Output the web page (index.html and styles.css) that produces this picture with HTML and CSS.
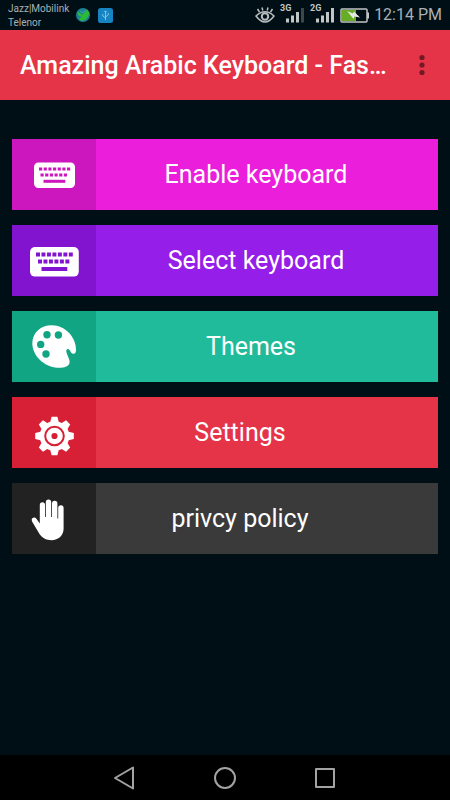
FILE: index.html
```
<!DOCTYPE html>
<html lang="en">
	<head>
		<meta charset="utf-8">
		<meta name="viewport" content="width=device-width, initial-scale=1">
		<title>Amazing Arabic Keyboard</title>
		<link rel="stylesheet" href="styles.css">
	</head>
	<body>
		<div class="statusbar">
			<div class="carriers">
				<div>Jazz|Mobilink</div>
				<div>Telenor</div>
			</div>
			<svg class="globe" width="14" height="14" viewBox="0 0 14 14">
				<circle cx="7" cy="7" r="7" fill="#1b8194"/>
				<path d="M1 4L4 5L6 7L9 4L11 1.500L13.500 5L12 9L9 12L5 13L3 10.500L6 9L3 8Z" fill="#2dbb35"/>
				<path d="M4 3L7 5L9 2" fill="none" stroke="#3ba7a6"/>
			</svg>
			<svg class="usb" width="15" height="15" viewBox="0 0 15 15">
				<rect width="15" height="15" rx="2.500" fill="#1683c2"/>
				<path d="M7.500 3V12M7.500 10L4.800 8V6M7.500 9L10.200 7V5M6.300 4.200L7.500 2.800L8.700 4.200" fill="none" stroke="#9bd0ec" stroke-width=".8"/>
			</svg>
			<div class="indicators">
				<svg width="20" height="30" viewBox="0 0 20 30" fill="none" stroke="#b9bec0" stroke-width="1.500">
					<path d="M1 16Q10 7.500 19 16Q10 28 1 16Z"/>
					<circle cx="10" cy="16.500" r="3.200" stroke-width="2"/>
					<path d="M2.500 9L4.500 12M7 7.500L7.800 10.500M13 7.500L12.200 10.500M17.500 9L15.500 12"/>
				</svg>
				<svg class="signal" width="25" height="30" viewBox="0 0 25 30">
					<text x="0" y="11">3G</text>
					<path d="M7.500 18.500V22.500M12.500 15.500V22.500M17.500 12V22.500"/>
					<path class="off" d="M22.500 8V22.500"/>
				</svg>
				<svg class="signal" width="25" height="30" viewBox="0 0 25 30">
					<text x="0" y="11">2G</text>
					<path d="M7.500 18.500V22.500M12.500 15.500V22.500M17.500 12V22.500M22.500 8V22.500"/>
				</svg>
				<svg width="29" height="30" viewBox="0 0 29 30">
					<rect x="1" y="9" width="26" height="13" rx="1" fill="none" stroke="#c2c5c6" stroke-width="1.500"/>
					<path d="M28 12.500V18.500" stroke="#c2c5c6" stroke-width="2"/>
					<rect x="2" y="10" width="14" height="11" fill="#67ac24"/>
					<path d="M7 11L13 13.500L14 11.500L20 17.500L14.500 16.500L13.500 19Z" fill="#e4e8e4"/>
				</svg>
				<time class="clock">12:14 PM</time>
			</div>
		</div>

		<header class="appbar">
			<h1 class="title">Amazing Arabic Keyboard - Fas…</h1>
			<button class="more" aria-label="More options">
				<svg width="6" height="22" viewBox="0 0 6 22" fill="#721a24">
					<circle cx="3" cy="3.500" r="2.600"/>
					<circle cx="3" cy="11" r="2.600"/>
					<circle cx="3" cy="18.500" r="2.600"/>
				</svg>
			</button>
		</header>

		<main class="menu">
			<button class="item enable">
				<span class="icon">
					<svg width="84" height="71" viewBox="0 0 84 71">
						<rect x="22" y="23.500" width="41" height="25.500" rx="4.500"/>
						<g class="keys" stroke-width="3">
							<path d="M27 30H58.200" stroke-dasharray="3.200 1.470"/>
							<path d="M28.500 36H55" stroke-dasharray="3.200 1.470"/>
							<path d="M31.500 42.300H53.300"/>
						</g>
					</svg>
				</span>
				<span class="label">Enable keyboard</span>
			</button>
			<button class="item select">
				<span class="icon">
					<svg width="84" height="71" viewBox="0 0 84 71">
						<rect x="18" y="22" width="48.800" height="29.600" rx="5"/>
						<g class="keys" stroke-width="4">
							<path d="M24 29.500H60.800" stroke-dasharray="4 1.470"/>
							<path d="M26 36.500H57.400" stroke-dasharray="4 1.470"/>
							<path d="M29.500 44H55.300"/>
						</g>
					</svg>
				</span>
				<span class="label">Select keyboard</span>
			</button>
			<button class="item themes">
				<span class="icon">
					<svg width="84" height="71" viewBox="0 0 84 71">
						<path d="M39.700 14.300C54 14.300 64 27 64 38.500C64 42 62.800 43.300 60.800 42.700C58.500 42 58 38 56 38C53.600 38 54.300 41 55.200 43.500C56.500 47 58.200 50 57.500 52C56.500 56 51 57 45.500 56.700C32 56 20.300 44.500 20.300 32.300C20.300 21.500 29 14.300 39.700 14.300Z"/>
						<g class="holes">
							<circle cx="35" cy="23.700" r="3.700"/>
							<circle cx="46.400" cy="24" r="3.700"/>
							<circle cx="28.700" cy="33.400" r="3.700"/>
							<circle cx="34" cy="43" r="3.700"/>
						</g>
					</svg>
				</span>
				<span class="label">Themes</span>
			</button>
			<button class="item settings">
				<span class="icon">
					<svg width="84" height="71" viewBox="0 0 84 71">
						<g transform="translate(42.500 39)">
							<circle r="14.800"/>
							<path id="teeth" d="M-4.500 -13L-2.900 -19.300H2.900L4.500 -13ZM-4.500 13L-2.900 19.300H2.900L4.500 13ZM-13 -4.500L-19.300 -2.900V2.900L-13 4.500ZM13 -4.500L19.300 -2.900V2.900L13 4.500Z"/>
							<use href="#teeth" transform="rotate(45)"/>
							<circle class="ring" r="9.300"/>
							<circle class="hole" r="3.100"/>
						</g>
					</svg>
				</span>
				<span class="label">Settings</span>
			</button>
			<button class="item policy">
				<span class="icon">
					<svg width="84" height="71" viewBox="0 0 84 71">
						<path d="M27.800 40.500V21.900A2.600 2.600 0 0 1 33 21.900V34H33.800V19.300A2.700 2.700 0 0 1 39.200 19.300V34H40V20.500A2.700 2.700 0 0 1 45.400 20.500V35.500H46.200V25A2.700 2.700 0 0 1 51.600 25V45.500C51.600 52.500 46.500 57.200 39.500 57.200C34 57.200 30 54.500 27.500 51L20.200 38.700C18.300 35 22.300 33 24.600 36Z"/>
					</svg>
				</span>
				<span class="label">privcy policy</span>
			</button>
		</main>

		<nav class="navbar">
			<button aria-label="Back">
				<svg width="24" height="24" viewBox="0 0 24 24"><path d="M2 12L20 1.500V22.500Z"/></svg>
			</button>
			<button aria-label="Home">
				<svg width="24" height="24" viewBox="0 0 24 24"><circle cx="12" cy="12" r="10"/></svg>
			</button>
			<button aria-label="Recent apps">
				<svg width="24" height="24" viewBox="0 0 24 24"><rect x="3" y="3" width="18" height="18"/></svg>
			</button>
		</nav>
	</body>
</html>
```
FILE: styles.css
```
* {
	box-sizing: border-box;
}

body {
	display: flex;
	flex-direction: column;
	min-height: 100vh;
	margin: 0;
	background: #000f16;
	color: white;
	font-family: Roboto, "Open Sans", sans-serif;
}

button {
	padding: 0;
	border: 0;
	background: none;
	color: inherit;
	font: inherit;
	cursor: pointer;
}

svg {
	display: block;
	flex: none;
}

/* status bar */
.statusbar {
	display: flex;
	align-items: center;
	height: 30px;
	padding: 0 8px;
	color: #a9afb2;
}

.carriers {
	padding-top: 2px;
	font-size: 10px;
	line-height: 14px;
}

.globe {
	margin-left: 7px;
}

.usb {
	margin-left: 8px;
}

.indicators {
	display: flex;
	align-items: center;
	gap: 5px;
	margin-left: auto;
}

.signal {
	fill: none;
	stroke: #c2c5c6;
	stroke-width: 3;
}

.signal text {
	fill: #c2c5c6;
	stroke: none;
	font-size: 9px;
	font-weight: bold;
}

.signal .off {
	stroke: #3a474d;
}

.clock {
	font-size: 16px;
	line-height: 30px;
}

/* title bar */
.appbar {
	display: flex;
	align-items: center;
	height: 70px;
	padding: 0 16px 0 20px;
	background: #e53347;
}

.title {
	flex: 1;
	min-width: 0;
	margin: 0;
	padding-top: 2px;
	overflow: hidden;
	font-size: 25px;
	font-weight: 500;
	line-height: 32px;
	white-space: nowrap;
}

.more {
	display: flex;
	justify-content: center;
	width: 24px;
	padding: 8px 0;
}

/* menu */
.menu {
	display: flex;
	flex: 1;
	flex-direction: column;
	gap: 15px;
	padding: 39px 12px;
}

.item {
	display: flex;
	align-items: center;
	min-height: 71px;
	background: var(--color);
}

.icon {
	background: var(--dark);
	fill: white;
}

.label {
	flex: 1;
	padding-right: 22px;
	font-size: 25px;
	line-height: 32px;
}

.keys {
	fill: none;
	stroke: var(--dark);
}

.holes,
.hole {
	fill: var(--dark);
}

.ring {
	fill: none;
	stroke: var(--dark);
	stroke-width: 2;
}

.enable {
	--color: #eb1fdb;
	--dark: #cc17be;
}

.select {
	--color: #951fe8;
	--dark: #8213cf;
}

.themes {
	--color: #1fbb9b;
	--dark: #12a583;
}

.settings {
	--color: #e53347;
	--dark: #d72036;
}

.policy {
	--color: #3a3a3a;
	--dark: #222222;
}

.themes .label {
	padding-right: 32px;
}

.settings .label,
.policy .label {
	padding-right: 54px;
}

/* navigation bar */
.navbar {
	display: flex;
	justify-content: center;
	gap: 76px;
	padding: 11px 0 10px;
	background: black;
}

.navbar svg {
	fill: none;
	stroke: #a3a3a3;
	stroke-width: 2;
	stroke-linejoin: round;
}
```
